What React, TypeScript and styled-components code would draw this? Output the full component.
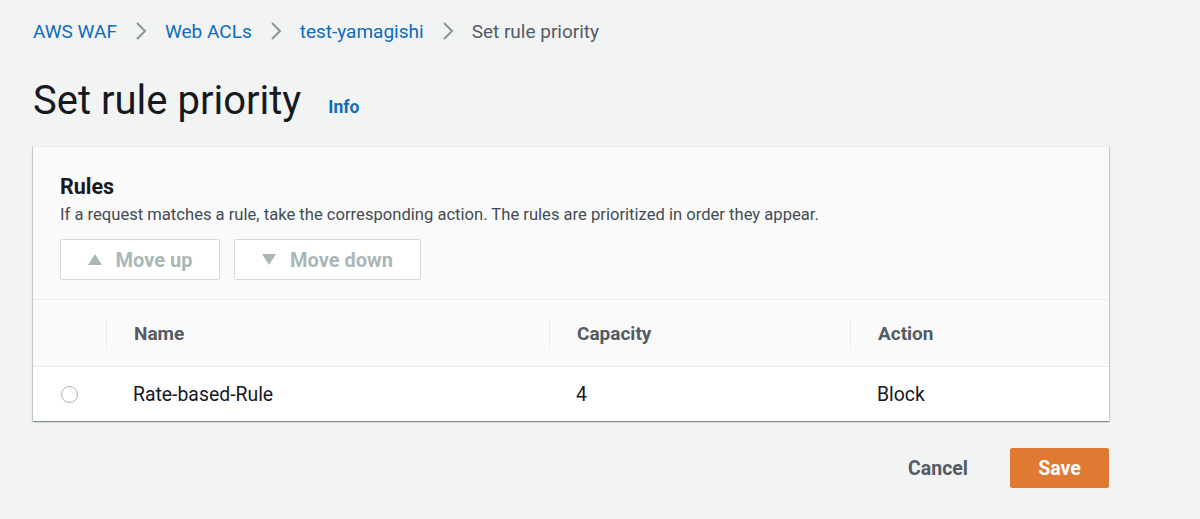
import React from 'react'
import styled, { createGlobalStyle } from 'styled-components'

const GlobalStyle = createGlobalStyle`
  html, body {
    margin: 0;
    padding: 0;
    background: #f2f3f3;
    font-family: Roboto, 'Liberation Sans', sans-serif;
    color: #16191f;
  }
`

const Page = styled.div`
  width: 1200px;
  height: 519px;
  box-sizing: border-box;
  padding: 0 91px 0 33px;
  display: flex;
  flex-direction: column;
`

const Breadcrumbs = styled.nav`
  display: flex;
  align-items: center;
  height: 62px;
  font-size: 19px;
`

const Crumb = styled.a<{ $current?: boolean }>`
  color: ${(p) => (p.$current ? '#545b64' : '#0f6bbd')};
  text-decoration: none;
`

const Chevron = styled.span`
  display: inline-flex;
  margin: 0 18px;
  color: #879596;
`

const TitleRow = styled.div`
  display: flex;
  align-items: baseline;
  margin-top: 15px;
  height: 69px;
`

const Title = styled.h1`
  margin: 0;
  font-size: 40px;
  font-weight: 400;
  color: #16191f;
`

const InfoLink = styled.a`
  margin-left: 27px;
  font-size: 17.5px;
  font-weight: 700;
  color: #0f6bbd;
  position: relative;
  top: -1px;
`

const Card = styled.section`
  background: #fff;
  box-shadow: 0 1px 1px 0 rgba(0, 28, 36, 0.3), 1px 1px 1px 0 rgba(0, 28, 36, 0.15),
    -1px 1px 1px 0 rgba(0, 28, 36, 0.15);
  border-top: 1px solid #eaeded;
`

const CardHeader = styled.div`
  background: #fafafa;
  padding: 26px 27px 19px;
  border-bottom: 1px solid #eaeded;
`

const CardTitle = styled.h2`
  margin: 0;
  font-size: 21.5px;
  font-weight: 700;
  line-height: 28px;
`

const Description = styled.p`
  margin: 3px 0 13px;
  font-size: 16.6px;
  color: #444b54;
  line-height: 22px;
`

const ButtonRow = styled.div`
  display: flex;
  gap: 14px;
`

const GhostButton = styled.button<{ $width: number }>`
  width: ${(p) => p.$width}px;
  height: 41px;
  display: flex;
  align-items: center;
  justify-content: center;
  gap: 14px;
  background: #fff;
  border: 1px solid #d5dbdb;
  border-radius: 2px;
  font-family: inherit;
  font-size: 20px;
  font-weight: 700;
  color: #aab7b8;
`

const Table = styled.div`
  display: grid;
  grid-template-columns: 73px 443px 301px 1fr;
`

const HeadCell = styled.div<{ $divider?: boolean }>`
  height: 66px;
  background: #fafafa;
  border-bottom: 1px solid #eaeded;
  display: flex;
  align-items: center;
  padding-left: 28px;
  font-size: 19px;
  font-weight: 700;
  color: #545b64;
  position: relative;
  ${(p) =>
    p.$divider &&
    `&::before {
      content: '';
      position: absolute;
      left: 0;
      top: 18px;
      bottom: 18px;
      border-left: 1px solid #eaeded;
    }`}
`

const BodyCell = styled.div`
  height: 54px;
  display: flex;
  align-items: center;
  padding-left: 27px;
  font-size: 19.4px;
  color: #16191f;
`

const Radio = styled.span`
  width: 15px;
  height: 15px;
  margin-left: 1px;
  border: 1.5px solid #aab7b8;
  border-radius: 50%;
  background: #fff;
`

const Footer = styled.div`
  display: flex;
  justify-content: flex-end;
  align-items: center;
  gap: 42px;
  margin-top: 27px;
`

const LinkButton = styled.button`
  background: none;
  border: none;
  font-family: inherit;
  font-size: 19.5px;
  font-weight: 700;
  color: #545b64;
  padding: 0;
`

const PrimaryButton = styled.button`
  width: 99px;
  height: 40px;
  background: #e07a33;
  border: 1px solid #e07a33;
  border-radius: 2px;
  font-family: inherit;
  font-size: 19.5px;
  font-weight: 700;
  color: #fff;
`

const ChevronIcon = () => (
  <svg width="12" height="20" viewBox="0 0 12 20">
    <path d="M2 2l8 8-8 8" fill="none" stroke="currentColor" strokeWidth="2" />
  </svg>
)

const Triangle = ({ down }: { down?: boolean }) => (
  <svg width="14" height="11" viewBox="0 0 14 11">
    <path d={down ? 'M0 0h14L7 11z' : 'M7 0l7 11H0z'} fill="#aab7b8" />
  </svg>
)

const crumbs = ['AWS WAF', 'Web ACLs', 'test-yamagishi']

export default function App() {
  return (
    <>
      <GlobalStyle />
      <Page>
        <Breadcrumbs>
          {crumbs.map((c) => (
            <React.Fragment key={c}>
              <Crumb href="#">{c}</Crumb>
              <Chevron>
                <ChevronIcon />
              </Chevron>
            </React.Fragment>
          ))}
          <Crumb $current>Set rule priority</Crumb>
        </Breadcrumbs>
        <TitleRow>
          <Title>Set rule priority</Title>
          <InfoLink>Info</InfoLink>
        </TitleRow>
        <Card>
          <CardHeader>
            <CardTitle>Rules</CardTitle>
            <Description>
              If a request matches a rule, take the corresponding action. The rules are
              prioritized in order they appear.
            </Description>
            <ButtonRow>
              <GhostButton $width={160} disabled>
                <Triangle />
                Move up
              </GhostButton>
              <GhostButton $width={187} disabled>
                <Triangle down />
                Move down
              </GhostButton>
            </ButtonRow>
          </CardHeader>
          <Table>
            <HeadCell />
            <HeadCell $divider>Name</HeadCell>
            <HeadCell $divider>Capacity</HeadCell>
            <HeadCell $divider>Action</HeadCell>
            <BodyCell>
              <Radio />
            </BodyCell>
            <BodyCell>Rate-based-Rule</BodyCell>
            <BodyCell>4</BodyCell>
            <BodyCell>Block</BodyCell>
          </Table>
        </Card>
        <Footer>
          <LinkButton>Cancel</LinkButton>
          <PrimaryButton>Save</PrimaryButton>
        </Footer>
      </Page>
    </>
  )
}
